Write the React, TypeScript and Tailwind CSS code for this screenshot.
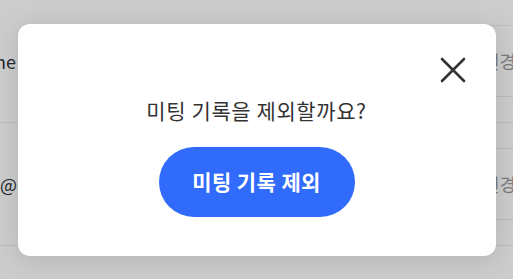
const font = { fontFamily: '"Noto Sans CJK KR", "Noto Sans", sans-serif' };

function BgRow({ left, tall, first }: { left: string; tall: number; first?: boolean }) {
  return (
    <div className="flex border-b border-[#ececec]" style={{ height: tall }}>
      <div className="flex w-[17px] items-center justify-end overflow-hidden whitespace-nowrap text-[18px] text-[#2c3440]">
        {left}
        {first && <span className="ml-px inline-block h-[18px] w-[2px] bg-[#e8a33a]" />}
      </div>
      <div className="flex-1" />
      <div className="flex w-[30px] flex-col justify-center">
        <div className="flex h-[72px] items-center border-y border-[#ececec] whitespace-nowrap text-[18px] text-[#9a9a9a]">
          변경
        </div>
      </div>
    </div>
  );
}

export default function App() {
  return (
    <div className="relative h-[279px] w-[513px] overflow-hidden bg-white" style={font}>
      <BgRow left="the" tall={123} first />
      <BgRow left="@" tall={123} />
      <div className="h-[40px]" />

      <div className="absolute inset-0 flex items-center justify-center bg-black/20">
        <div className="relative flex h-[232px] w-[478px] flex-col items-center rounded-[12px] bg-white shadow-[0_4px_24px_rgba(0,0,0,0.12)]">
          <button className="absolute right-[30px] top-[33px] text-[#333]">
            <svg width="26" height="26" viewBox="0 0 26 26" fill="none" stroke="currentColor" strokeWidth="2.6" strokeLinecap="round">
              <path d="M2 2 24 24M24 2 2 24" />
            </svg>
          </button>
          <p className="pt-[72px] text-[21px] leading-[28px] tracking-[0.6px] text-[#333]">미팅 기록을 제외할까요?</p>
          <button className="mt-[23px] h-[70px] w-[196px] rounded-full bg-[#306bfb] text-[21px] font-bold tracking-[0.4px] text-white">
            미팅 기록 제외
          </button>
        </div>
      </div>
    </div>
  );
}
